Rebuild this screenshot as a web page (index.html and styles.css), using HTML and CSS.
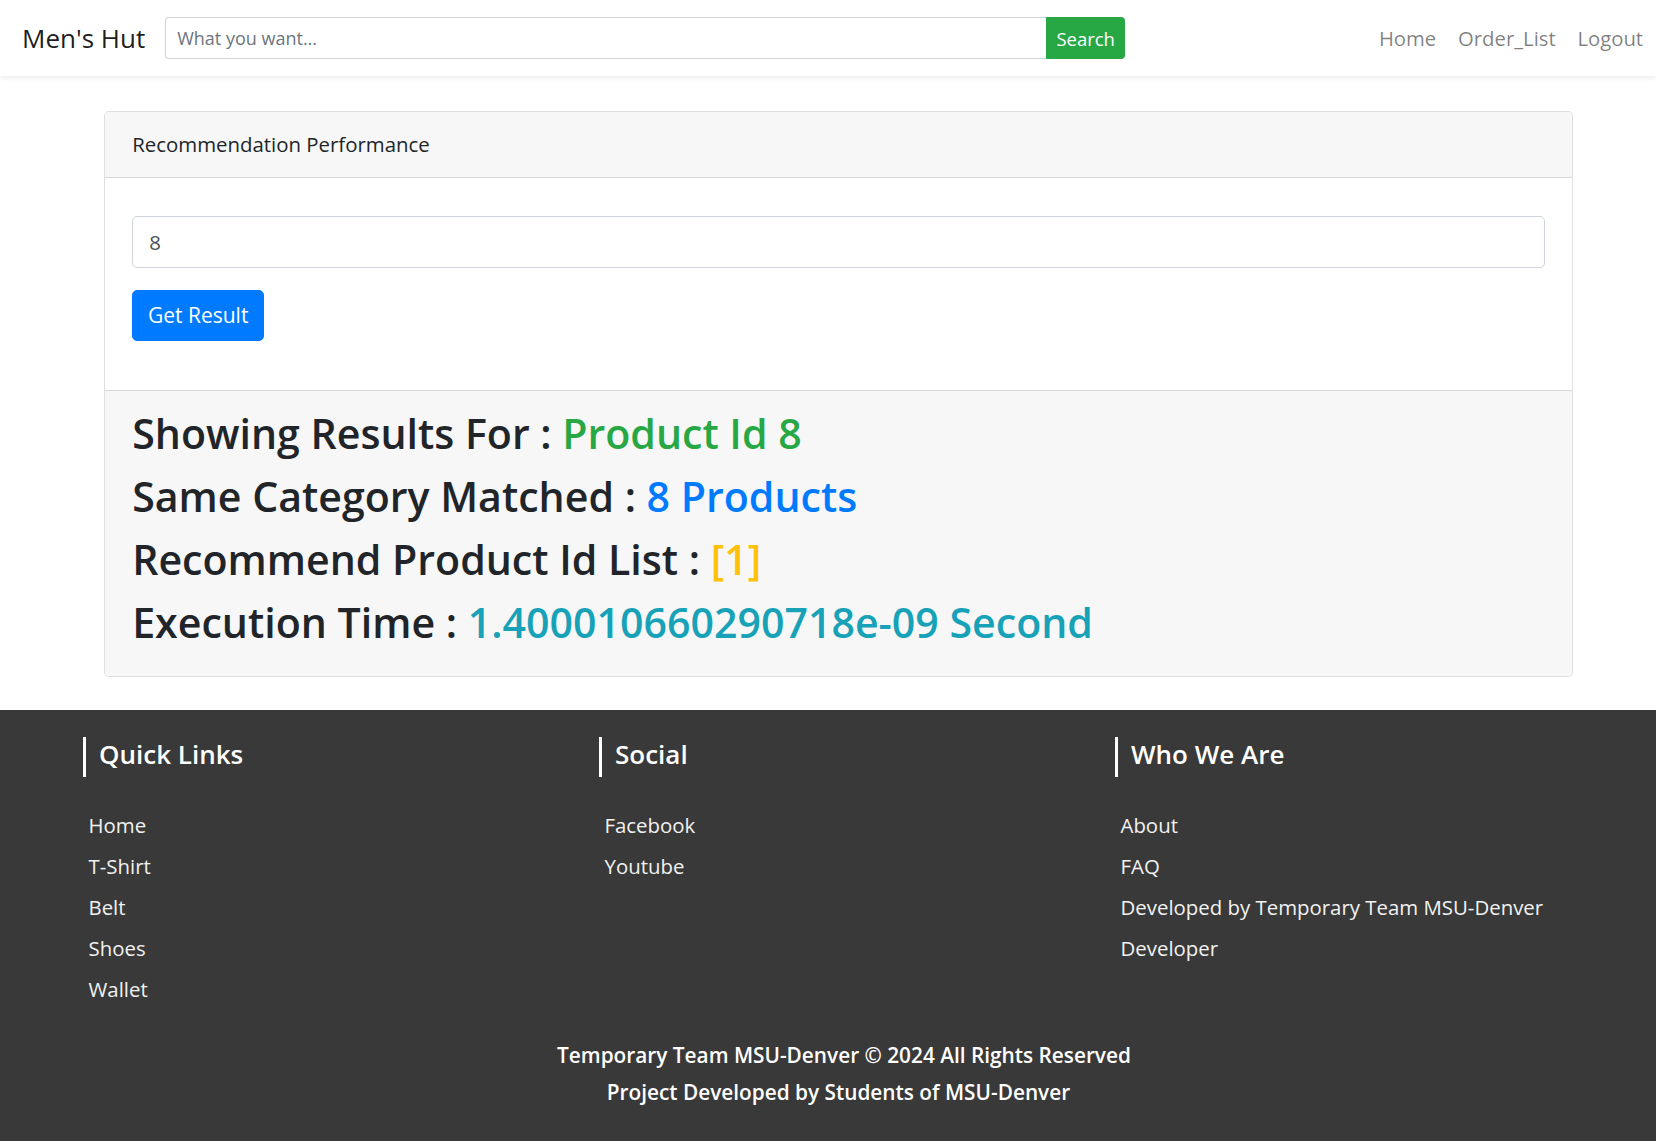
FILE: index.html
```html
<!DOCTYPE html>
<html lang="en">
<head>
<meta charset="utf-8">
<title>Men's Hut</title>
<link rel="stylesheet" href="styles.css">
</head>
<body>
<nav class="navbar">
  <a class="brand" href="#">Men's Hut</a>
  <form class="search">
    <input class="search-input" type="text" placeholder="What you want...">
    <button class="search-btn" type="button">Search</button>
  </form>
  <ul class="nav-links">
    <li><a href="#">Home</a></li>
    <li><a href="#">Order_List</a></li>
    <li><a href="#">Logout</a></li>
  </ul>
</nav>

<main class="main">
  <section class="card">
    <div class="card-header">Recommendation Performance</div>
    <div class="card-body">
      <div class="form-group">
        <input class="form-control" type="text" value="8">
      </div>
      <div class="form-group">
        <button class="btn-primary" type="button">Get Result</button>
      </div>
    </div>
    <div class="card-footer">
      <h2 class="result">Showing Results For : <span class="t-green">Product Id 8</span></h2>
      <h2 class="result">Same Category Matched : <span class="t-blue">8 Products</span></h2>
      <h2 class="result">Recommend Product Id List : <span class="t-yellow">[1]</span></h2>
      <h2 class="result">Execution Time : <span class="t-teal">1.400010660290718e-09 Second</span></h2>
    </div>
  </section>
</main>

<footer class="footer">
  <div class="footer-cols">
    <div class="footer-col">
      <h4 class="footer-title">Quick Links</h4>
      <ul class="footer-list">
        <li><a href="#">Home</a></li>
        <li><a href="#">T-Shirt</a></li>
        <li><a href="#">Belt</a></li>
        <li><a href="#">Shoes</a></li>
        <li><a href="#">Wallet</a></li>
      </ul>
    </div>
    <div class="footer-col">
      <h4 class="footer-title">Social</h4>
      <ul class="footer-list">
        <li><a href="#">Facebook</a></li>
        <li><a href="#">Youtube</a></li>
      </ul>
    </div>
    <div class="footer-col">
      <h4 class="footer-title">Who We Are</h4>
      <ul class="footer-list">
        <li><a href="#">About</a></li>
        <li><a href="#">FAQ</a></li>
        <li><a href="#">Developed by Temporary Team MSU-Denver</a></li>
        <li><a href="#">Developer</a></li>
      </ul>
    </div>
  </div>
  <div class="copyright">
    <p class="copy-line">Temporary Team MSU-Denver © 2024 All Rights Reserved</p>
    <p class="copy-line copy-sub">Project Developed by Students of MSU-Denver</p>
  </div>
</footer>
</body>
</html>
```

FILE: styles.css
```css
* { box-sizing: border-box; }

html, body {
  margin: 0;
  padding: 0;
}

body {
  font-family: "Open Sans", "Noto Sans", "Liberation Sans", sans-serif;
  font-size: 20.4px;
  line-height: 1.5;
  color: #212529;
  background: #fff;
  min-height: 100vh;
  display: flex;
  flex-direction: column;
}

a { text-decoration: none; }

/* ---------- navbar ---------- */
.navbar {
  height: 76px;
  flex: none;
  display: flex;
  align-items: center;
  padding: 0 2px 0 22px;
  background: #fff;
  box-shadow: 0 2px 5px rgba(0, 0, 0, 0.08);
  position: relative;
  z-index: 2;
}

.brand {
  font-size: 26px;
  color: rgba(0, 0, 0, 0.9);
  margin-right: 20px;
  white-space: nowrap;
}

.search {
  display: flex;
  height: 42px;
  margin: 0;
}

.search-input {
  width: 881px;
  height: 42px;
  border: 1px solid #ced4da;
  border-right: none;
  border-radius: 4px 0 0 4px;
  padding: 0 11px;
  font-family: inherit;
  font-size: 18px;
  color: #495057;
  outline: none;
}

.search-input::placeholder { color: #6c757d; }

.search-btn {
  width: 79px;
  height: 42px;
  border: none;
  border-radius: 0 4px 4px 0;
  background: #28a745;
  color: #fff;
  font-family: inherit;
  font-size: 18.5px;
  padding: 0;
}

.nav-links {
  list-style: none;
  display: flex;
  margin: 0 0 0 auto;
  padding: 0;
  font-size: 20.3px;
}

.nav-links a {
  display: block;
  padding: 0 10.9px;
  color: rgba(0, 0, 0, 0.5);
}

/* ---------- card ---------- */
.main {
  flex: none;
  padding: 35px 83px 33.5px 104px;
}

.card {
  border: 1px solid rgba(0, 0, 0, 0.125);
  border-radius: 5px;
  background: #fff;
  overflow: hidden;
}

.card-header {
  background: #f7f7f7;
  border-bottom: 1px solid rgba(0, 0, 0, 0.125);
  padding: 16.3px 27.2px;
  line-height: 32.7px;
}

.card-body {
  padding: 38px 27.2px 27.2px;
}

.form-group { margin-bottom: 21.8px; }

.form-control {
  display: block;
  width: 100%;
  height: 51.5px;
  border: 1px solid #ced4da;
  border-radius: 5px;
  padding: 0 16px;
  font-family: inherit;
  font-size: 20.4px;
  color: #495057;
  outline: none;
}

.btn-primary {
  width: 132px;
  height: 51px;
  border: 1px solid #007bff;
  border-radius: 5px;
  background: #007bff;
  color: #fff;
  font-family: inherit;
  font-size: 21px;
  padding: 0;
}

.card-footer {
  background: #f7f7f7;
  border-top: 1px solid rgba(0, 0, 0, 0.125);
  padding: 16.3px 27.2px;
}

.result {
  margin: 0 0 10.9px;
  font-size: 41.1px;
  line-height: 52.2px;
  font-weight: 600;
  white-space: nowrap;
}

.t-green { color: #28a745; }
.t-blue { color: #007bff; }
.t-yellow { color: #ffc107; }
.t-teal { color: #17a2b8; }

/* ---------- footer ---------- */
.footer {
  flex: 1 0 auto;
  background: #393939;
  color: #fff;
  padding: 27.4px 0 38px;
}

.footer-cols {
  width: 1548px;
  margin: 0 auto;
  display: grid;
  grid-template-columns: repeat(3, 1fr);
}

.footer-col {
  padding-left: 29px;
}

.footer-title {
  margin: 0;
  border-left: 3px solid #fff;
  padding: 0 0 6px 13px;
  font-size: 26px;
  line-height: 34px;
  font-weight: 600;
}

.footer-list {
  list-style: none;
  margin: 27.5px 0 0;
  padding: 0 0 0 5.5px;
}

.footer-list li {
  line-height: 41px;
}

.footer-list a {
  color: #f2f2f2;
}

.copyright {
  width: 1548px;
  margin: 27px auto 0;
  padding-left: 32px;
  text-align: center;
  font-weight: 600;
  font-size: 20.8px;
}

.copy-line {
  margin: 0;
  line-height: 37px;
}

.copy-sub {
  padding-right: 11px;
}
```
